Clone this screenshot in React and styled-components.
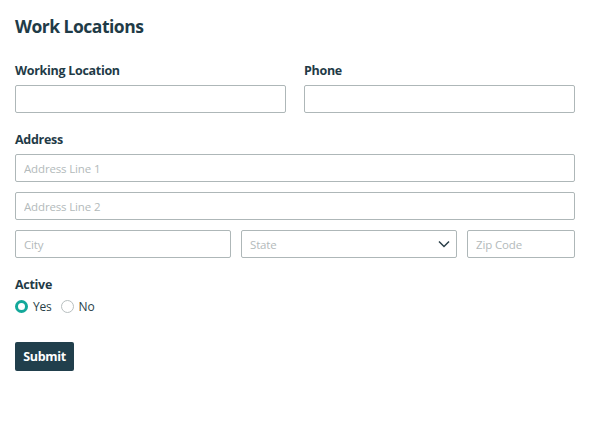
import React from "react";
import styled, { createGlobalStyle } from "styled-components";

const Global = createGlobalStyle`
  html, body { margin: 0; padding: 0; background: #fff; }
  body { font-family: "Open Sans", "Noto Sans", sans-serif; color: #1f3b47; }
  * { box-sizing: border-box; }
`;

const Page = styled.form`
  padding: 14px 15px 0 15px;
  width: 590px;
`;

const Title = styled.h1`
  margin: 0;
  font-size: 17.5px;
  letter-spacing: -0.5px;
  line-height: 24px;
  font-weight: 700;
  color: #1f3b47;
`;

const TwoCols = styled.div`
  display: grid;
  grid-template-columns: 1fr 1fr;
  column-gap: 18px;
  margin-top: 24px;
`;

const Field = styled.div`
  display: flex;
  flex-direction: column;
`;

const Label = styled.label`
  font-size: 12.5px;
  letter-spacing: -0.3px;
  line-height: 18px;
  font-weight: 700;
  color: #1f3b47;
  margin-bottom: ${(p) => p.$gap ?? 5}px;
`;

const Section = styled.div`
  display: flex;
  flex-direction: column;
  margin-top: ${(p) => p.$top ?? 18}px;
`;

const Stack = styled.div`
  display: flex;
  flex-direction: column;
  gap: 10px;
`;

const Input = styled.input`
  height: 28px;
  width: 100%;
  border: 1px solid #aeb7b8;
  border-radius: 2px;
  padding: 0 8px;
  font-family: inherit;
  font-size: 11.5px;
  letter-spacing: -0.15px;
  color: #1f3b47;
  outline: none;
  &::placeholder { color: #b3babb; }
`;

const CityRow = styled.div`
  display: grid;
  grid-template-columns: 2fr 2fr 1fr;
  gap: 10px;
`;

const SelectBox = styled.div`
  position: relative;
  height: 28px;
  border: 1px solid #aeb7b8;
  border-radius: 2px;
  display: flex;
  align-items: center;
  padding: 0 8px;
  font-size: 11.5px;
  letter-spacing: -0.15px;
  color: #b3babb;
`;

const Chevron = styled.svg`
  position: absolute;
  right: 6px;
  top: 50%;
  transform: translateY(-50%);
`;

const RadioRow = styled.div`
  display: flex;
  align-items: center;
  height: 18px;
  margin-top: 3px;
  gap: 9px;
`;

const RadioOption = styled.label`
  display: flex;
  align-items: center;
  gap: 5px;
  font-size: 12px;
  letter-spacing: -0.2px;
  color: #2a3f48;
`;

const RadioDot = styled.span`
  width: 13px;
  height: 13px;
  border-radius: 50%;
  box-sizing: border-box;
  border: ${(p) => (p.$checked ? "3.5px solid #13a89a" : "1px solid #b8bfc0")};
  background: #fff;
`;

const Button = styled.button`
  margin-top: 27px;
  height: 29px;
  width: 59px;
  border: none;
  border-radius: 2px;
  background: #213f4c;
  color: #fff;
  font-family: inherit;
  font-weight: 700;
  font-size: 12.5px;
  letter-spacing: -0.3px;
  padding: 0;
`;

export default function App() {
  return (
    <>
      <Global />
      <Page onSubmit={(e) => e.preventDefault()}>
        <Title>Work Locations</Title>
        <TwoCols>
          <Field>
            <Label>Working Location</Label>
            <Input />
          </Field>
          <Field>
            <Label>Phone</Label>
            <Input />
          </Field>
        </TwoCols>
        <Section>
          <Label>Address</Label>
          <Stack>
            <Input placeholder="Address Line 1" />
            <Input placeholder="Address Line 2" />
            <CityRow>
              <Input placeholder="City" />
              <SelectBox>
                State
                <Chevron width="12" height="8" viewBox="0 0 12 8">
                  <path d="M1 1.5 L6 6.5 L11 1.5" fill="none" stroke="#2a3f48" strokeWidth="1.5" />
                </Chevron>
              </SelectBox>
              <Input placeholder="Zip Code" />
            </CityRow>
          </Stack>
        </Section>
        <Section>
          <Label $gap={0}>Active</Label>
          <RadioRow>
            <RadioOption>
              <RadioDot $checked />
              Yes
            </RadioOption>
            <RadioOption>
              <RadioDot />
              No
            </RadioOption>
          </RadioRow>
        </Section>
        <Button type="submit">Submit</Button>
      </Page>
    </>
  );
}
